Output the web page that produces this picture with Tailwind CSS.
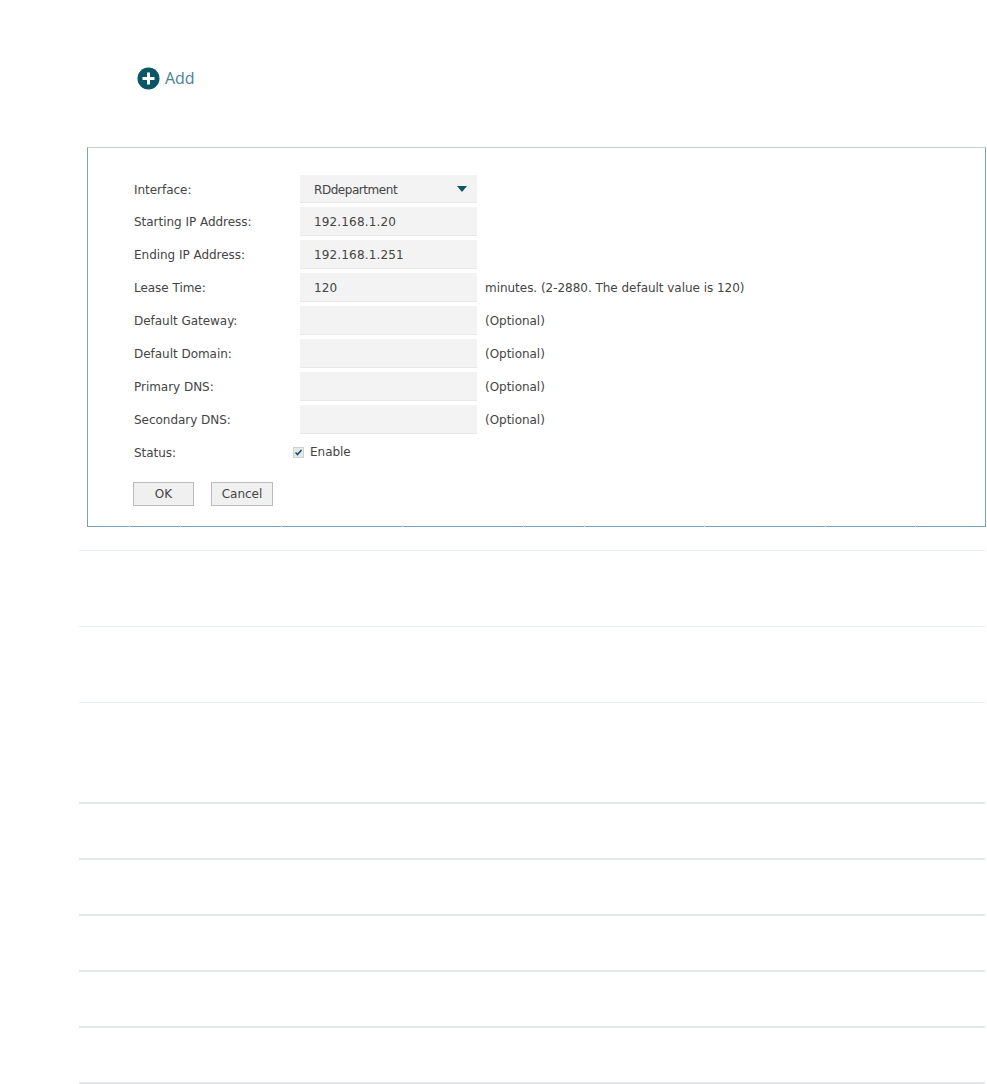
<!DOCTYPE html>
<html lang="en">
<head>
  <meta charset="UTF-8" />
  <title>DHCP Server</title>
  <script src="https://cdn.jsdelivr.net/npm/@tailwindcss/browser@4"></script>
</head>
<body class="bg-white h-[1084px] overflow-hidden font-['DejaVu_Sans',sans-serif] text-[12px] tracking-[-0.03px] text-[#444]">
  <div class="pt-[66px] pl-[137px] h-[147px]">
    <button class="flex items-center gap-[5px] text-[#4a7f9c] text-[16px] font-['Open_Sans',sans-serif]">
      <svg class="w-[23px] h-[23px]" viewBox="0 0 23 23">
        <circle cx="11.5" cy="11.5" r="11" fill="#0a5566" />
        <path d="M11.5 5.5v12M5.5 11.5h12" stroke="#fff" stroke-width="3" />
      </svg>
      Add
    </button>
  </div>

  <div class="relative ml-[87px] w-[899px] h-[380px] border border-[#7a9fbb] border-t-[#c5ced6] pt-[27px] pl-[46px]">
    <div class="flex flex-col gap-[4px]">
      <div class="flex items-center h-[28px]">
        <label class="w-[166px] pt-[2px]">Interface:</label>
        <div class="w-[177px] h-[28px] bg-[#f3f3f3] border-b border-[#e8e8e8] pt-[2px] pl-[14px] pr-[10px] flex items-center justify-between">
          <span class="tracking-[-0.45px]">RDdepartment</span>
          <span class="w-0 h-0 -mt-[2px] border-x-[5px] border-x-transparent border-t-[6px] border-t-[#0a5566]"></span>
        </div>
      </div>
      <div class="flex items-center h-[29px]">
        <label class="w-[166px]">Starting IP Address:</label>
        <input class="w-[177px] h-[29px] bg-[#f3f3f3] border-b border-[#e8e8e8] pt-[2px] pl-[14px] tracking-[0.15px]" value="192.168.1.20" />
      </div>
      <div class="flex items-center h-[29px]">
        <label class="w-[166px]">Ending IP Address:</label>
        <input class="w-[177px] h-[29px] bg-[#f3f3f3] border-b border-[#e8e8e8] pt-[2px] pl-[14px] tracking-[0.15px]" value="192.168.1.251" />
      </div>
      <div class="flex items-center h-[29px]">
        <label class="w-[166px]">Lease Time:</label>
        <input class="w-[177px] h-[29px] bg-[#f3f3f3] border-b border-[#e8e8e8] pt-[2px] pl-[14px] tracking-[0.15px]" value="120" />
        <span class="ml-[8px]">minutes. (2-2880. The default value is 120)</span>
      </div>
      <div class="flex items-center h-[29px]">
        <label class="w-[166px]">Default Gateway:</label>
        <input class="w-[177px] h-[29px] bg-[#f3f3f3] border-b border-[#e8e8e8] pl-[14px]" />
        <span class="ml-[8px]">(Optional)</span>
      </div>
      <div class="flex items-center h-[29px]">
        <label class="w-[166px]">Default Domain:</label>
        <input class="w-[177px] h-[29px] bg-[#f3f3f3] border-b border-[#e8e8e8] pl-[14px]" />
        <span class="ml-[8px]">(Optional)</span>
      </div>
      <div class="flex items-center h-[29px]">
        <label class="w-[166px]">Primary DNS:</label>
        <input class="w-[177px] h-[29px] bg-[#f3f3f3] border-b border-[#e8e8e8] pl-[14px]" />
        <span class="ml-[8px]">(Optional)</span>
      </div>
      <div class="flex items-center h-[29px]">
        <label class="w-[166px]">Secondary DNS:</label>
        <input class="w-[177px] h-[29px] bg-[#f3f3f3] border-b border-[#e8e8e8] pl-[14px]" />
        <span class="ml-[8px]">(Optional)</span>
      </div>
      <div class="flex items-center h-[29px]">
        <label class="w-[159px]">Status:</label>
        <span class="w-[11px] h-[11px] bg-[#e8e8e8] border border-[#d0d0d0] flex items-center justify-center">
          <svg class="w-[9px] h-[9px]" viewBox="0 0 9 9"><path d="M1.5 4.5l2 2 4-4.5" fill="none" stroke="#0a5566" stroke-width="1.6" /></svg>
        </span>
        <span class="ml-[6px] -mt-[2px]">Enable</span>
      </div>
    </div>
    <div class="flex gap-[17px] mt-[15px] -ml-px">
      <button class="w-[61px] h-[24px] bg-[#f0f0f0] border border-[#bbb]">OK</button>
      <button class="w-[62px] h-[24px] bg-[#f0f0f0] border border-[#bbb]">Cancel</button>
    </div>

    <!-- small light ticks that cut the bottom border -->
    <i class="absolute -bottom-px left-[41px] w-px h-[2px] bg-[#d5dde3]"></i>
    <i class="absolute -bottom-px left-[92px] w-px h-[2px] bg-[#d5dde3]"></i>
    <i class="absolute -bottom-px left-[193px] w-px h-[2px] bg-[#d5dde3]"></i>
    <i class="absolute -bottom-px left-[314px] w-px h-[2px] bg-[#d5dde3]"></i>
    <i class="absolute -bottom-px left-[435px] w-px h-[2px] bg-[#d5dde3]"></i>
    <i class="absolute -bottom-px left-[496px] w-px h-[2px] bg-[#d5dde3]"></i>
    <i class="absolute -bottom-px left-[616px] w-px h-[2px] bg-[#d5dde3]"></i>
    <i class="absolute -bottom-px left-[737px] w-px h-[2px] bg-[#d5dde3]"></i>
    <i class="absolute -bottom-px left-[827px] w-px h-[2px] bg-[#d5dde3]"></i>
  </div>

  <div class="ml-[79px] w-[906px]">
    <div class="h-[23px]"></div>
    <div class="h-[76px] border-t border-[#e8edf1]"></div>
    <div class="h-[76px] border-t border-[#e8edf1]"></div>
    <div class="h-[100px] border-t border-[#e8edf1]"></div>
    <div class="h-[56px] border-t-2 border-[#e4e9ee]"></div>
    <div class="h-[56px] border-t-2 border-[#e4e9ee]"></div>
    <div class="h-[56px] border-t-2 border-[#e4e9ee]"></div>
    <div class="h-[56px] border-t-2 border-[#e4e9ee]"></div>
    <div class="h-[56px] border-t-2 border-[#e4e9ee]"></div>
    <div class="h-[2px] border-t-2 border-[#e4e9ee]"></div>
  </div>
</body>
</html>
